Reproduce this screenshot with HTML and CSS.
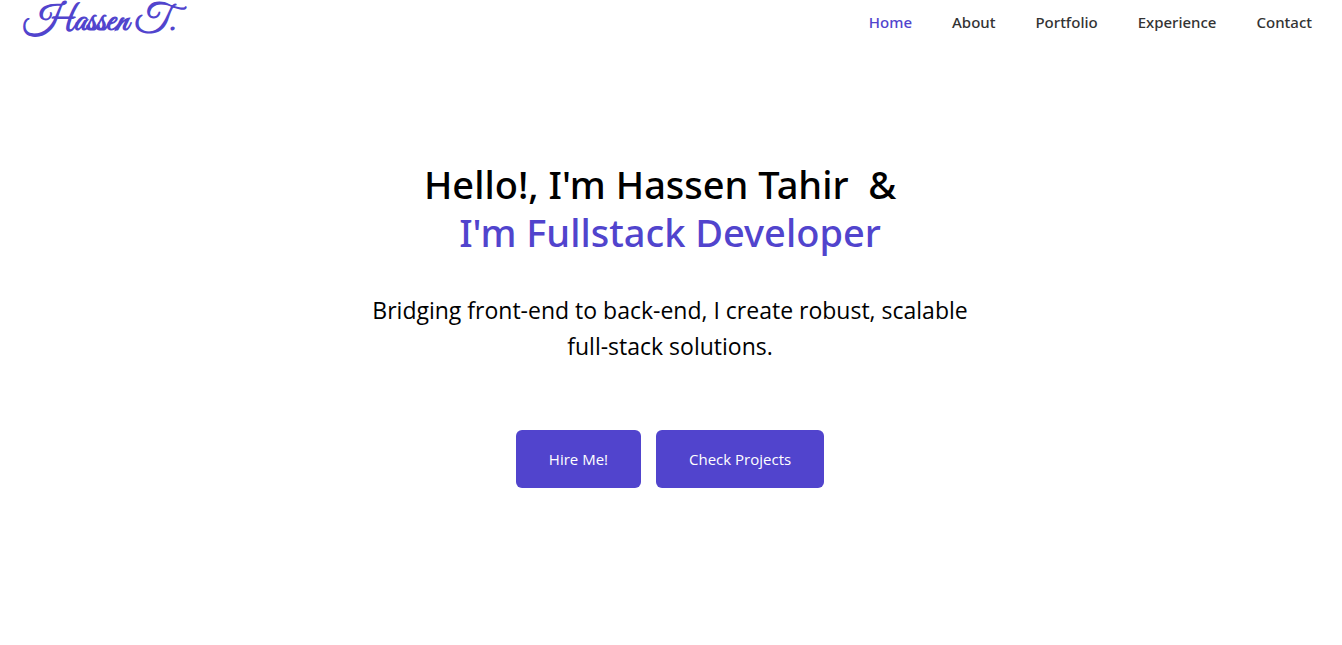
FILE: index.html
```html
<!DOCTYPE html>
<html lang="en">
<head>
<meta charset="utf-8">
<meta name="viewport" content="width=device-width, initial-scale=1">
<title>Hassen T.</title>
<link rel="stylesheet" href="styles.css">
</head>
<body>
<header class="site-header">
  <a class="brand" href="#home">Hassen T.</a>
  <nav class="site-nav" aria-label="Main">
    <a class="nav-link active" href="#home">Home</a>
    <a class="nav-link" href="#about">About</a>
    <a class="nav-link" href="#portfolio">Portfolio</a>
    <a class="nav-link" href="#experience">Experience</a>
    <a class="nav-link" href="#contact">Contact</a>
  </nav>
</header>
<main class="hero" id="home">
  <h1 class="hero-title">Hello!, I'm Hassen Tahir&nbsp; &amp;&nbsp;&nbsp;<br><span class="accent">I'm Fullstack Developer</span></h1>
  <p class="hero-text">Bridging front-end to back-end, I create robust, scalable full-stack solutions.</p>
  <div class="hero-actions">
    <a class="button" href="#contact">Hire Me!</a>
    <a class="button" href="#portfolio">Check Projects</a>
  </div>
</main>
</body>
</html>
```
FILE: styles.css
```css
* {
  box-sizing: border-box;
}

body {
  margin: 0;
  background: #fff;
  color: #000;
  font-family: "Segoe UI", "Open Sans", "Noto Sans", sans-serif;
}

a {
  text-decoration: none;
}

.site-header {
  display: flex;
  align-items: center;
  justify-content: space-between;
  padding: 0 30px 0 24px;
  height: 44px;
}

.brand {
  color: #5144cd;
  font-family: "Great Vibes", "Liberation Serif", cursive;
  font-size: 36px;
  font-weight: 700;
  line-height: 40px;
}

.site-nav {
  display: flex;
  gap: 40px;
}

.nav-link {
  color: #333;
  font-family: "Segoe UI", "Noto Sans", sans-serif;
  font-size: 15px;
  font-weight: 500;
  line-height: 24px;
}

.nav-link.active,
.accent {
  color: #5144cd;
}

.hero {
  display: flex;
  flex-direction: column;
  align-items: center;
  padding: 116px 18px 80px 16px;
  text-align: center;
}

.hero-title {
  margin: 0;
  font-family: "Segoe UI", "Noto Sans", sans-serif;
  font-size: 38px;
  font-weight: 500;
  line-height: 48px;
}

.hero-text {
  max-width: 640px;
  margin: 36px 0 0;
  font-size: 23px;
  line-height: 36px;
}

.hero-actions {
  display: flex;
  flex-wrap: wrap;
  justify-content: center;
  gap: 15px;
  margin-top: 66px;
}

.button {
  padding: 17px 33px;
  border-radius: 6px;
  background: #5144cd;
  color: #fff;
  font-size: 15px;
  line-height: 24px;
}
```
